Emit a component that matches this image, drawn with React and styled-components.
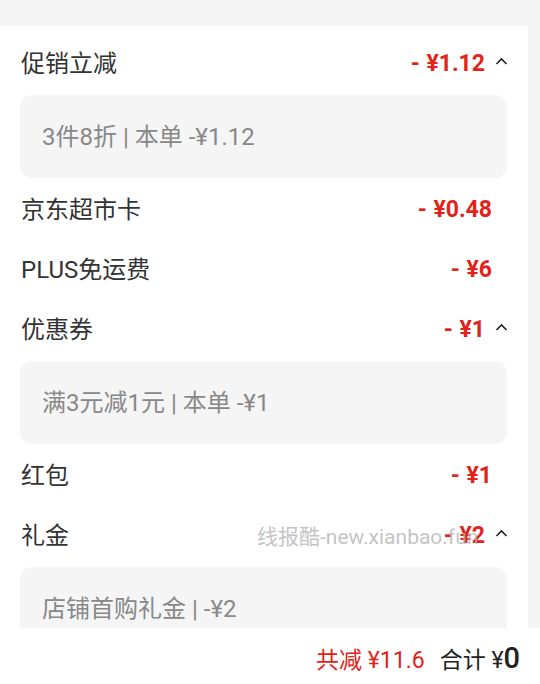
import React from 'react';
import styled, { createGlobalStyle } from 'styled-components';

const GlobalStyle = createGlobalStyle`
  html, body {
    margin: 0;
    padding: 0;
    background: #f5f5f5;
    font-family: Roboto, "Noto Sans CJK SC", sans-serif;
  }
`

const items = [
  { label: '促销立减', amount: '¥1.12', open: true, detail: '3件8折 | 本单 -¥1.12' },
  { label: '京东超市卡', amount: '¥0.48' },
  { label: 'PLUS免运费', amount: '¥6' },
  { label: '优惠券', amount: '¥1', open: true, detail: '满3元减1元 | 本单 -¥1' },
  { label: '红包', amount: '¥1' },
  { label: '礼金', amount: '¥2', open: true, detail: '店铺首购礼金 | -¥2', watermark: true },
]

const Chevron = () => (
  <svg width="13" height="8" viewBox="0 0 13 8">
    <path d="M1.5 7 L6.5 2 L11.5 7" fill="none" stroke="#222" strokeWidth="1.6" />
  </svg>
)

const App = () => {
  return (
    <Page>
      <GlobalStyle />
      <Layout>
        <Panel>
          {items.map((item) => (
            <React.Fragment key={item.label}>
              <Row>
                <Label>{item.label}</Label>
                <Amount $open={item.open}>- {item.amount}</Amount>
                {item.open && <Toggle><Chevron /></Toggle>}
                {item.watermark && <Watermark>线报酷-new.xianbao.fun</Watermark>}
              </Row>
              {item.detail && <Detail>{item.detail}</Detail>}
            </React.Fragment>
          ))}
        </Panel>
        <Gutter />
      </Layout>
      <BottomBar>
        <Saved>共减 ¥11.6</Saved>
        <Total>合计 ¥<Big>0</Big></Total>
      </BottomBar>
    </Page>
  );
}

export default App;

const Page = styled.div`
  width: 540px;
  height: 684px;
  overflow: hidden;
  display: flex;
  flex-direction: column;
  background: #f5f5f5;
  padding-top: 26px;
  box-sizing: border-box;
`

const Layout = styled.div`
  flex: 1;
  display: flex;
  overflow: hidden;
`

const Panel = styled.div`
  width: 528px;
  background: #fff;
  padding-top: 7px;
  overflow: hidden;
`

const Gutter = styled.div`
  flex: 1;
  background: #f5f5f5;
`

const Row = styled.div`
  position: relative;
  height: 60px;
  display: flex;
  align-items: center;
  padding: 0 20px 0 21px;
`

const Label = styled.div`
  flex: 1;
  font-size: 24px;
  line-height: 30px;
  color: #333;
  padding-top: 1px;
`

const Amount = styled.div`
  font-size: 23px;
  font-weight: 700;
  color: #e2231a;
  word-spacing: 1px;
  margin-right: ${(p) => (p.$open ? '0' : '16px')};
`

const Toggle = styled.div`
  width: 23px;
  display: flex;
  justify-content: flex-end;
  padding-bottom: 4px;
`

const Watermark = styled.div`
  position: absolute;
  left: 257px;
  top: 50%;
  transform: translateY(-50%);
  font-size: 21px;
  color: rgba(180, 180, 180, 0.8);
  pointer-events: none;
`

const Detail = styled.div`
  height: 83px;
  margin: 2px 21px 1px 20px;
  border-radius: 12px;
  background: #f5f5f5;
  display: flex;
  align-items: center;
  padding: 0 0 5px 22px;
  box-sizing: border-box;
  font-size: 24px;
  color: #888;
`

const BottomBar = styled.div`
  height: 56px;
  background: #fff;
  display: flex;
  align-items: center;
  justify-content: flex-end;
  gap: 15px;
  padding: 4px 20px 0 0;
  box-sizing: border-box;
`

const Saved = styled.div`
  font-size: 23px;
  color: #e2231a;
`

const Total = styled.div`
  font-size: 23px;
  color: #222;
`

const Big = styled.span`
  font-size: 29px;
  font-weight: 500;
`
